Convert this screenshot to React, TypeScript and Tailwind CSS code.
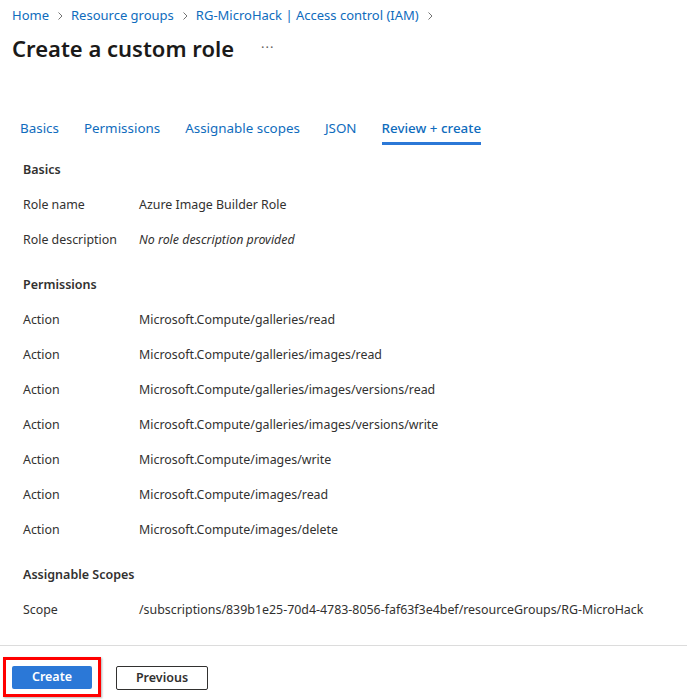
import React from "react";

const font = { fontFamily: '"Noto Sans", "Open Sans", sans-serif' };

function Chevron() {
  return (
    <svg width="12" height="12" viewBox="0 0 12 12" className="mx-[5px] text-[#737373]">
      <path d="M4.5 2.5 L8 6 L4.5 9.5" fill="none" stroke="currentColor" strokeWidth="1" />
    </svg>
  );
}

function Row({ label, value, italic }: { label: string; value: string; italic?: boolean }) {
  return (
    <div className="flex h-[35px] items-center text-[12.4px] text-[#323130]">
      <div className="w-[116px] shrink-0">{label}</div>
      <div className={italic ? "italic" : ""}>{value}</div>
    </div>
  );
}

function Heading({ children }: { children: React.ReactNode }) {
  return <div className="flex h-[35px] items-center text-[12.5px] font-semibold text-[#323130]">{children}</div>;
}

export default function App() {
  const actions = [
    "Microsoft.Compute/galleries/read",
    "Microsoft.Compute/galleries/images/read",
    "Microsoft.Compute/galleries/images/versions/read",
    "Microsoft.Compute/galleries/images/versions/write",
    "Microsoft.Compute/images/write",
    "Microsoft.Compute/images/read",
    "Microsoft.Compute/images/delete",
  ];
  return (
    <div style={font} className="w-[687px] h-[699px] bg-white flex flex-col overflow-hidden">
      <div className="flex items-center pl-[12px] pt-[5px] h-[22px] text-[13px] text-[#0f6cbd] box-content">
        <span>Home</span>
        <Chevron />
        <span>Resource groups</span>
        <Chevron />
        <span>RG-MicroHack | Access control (IAM)</span>
        <Chevron />
      </div>
      <div className="flex items-center pl-[12px] mt-[5px] h-[32px]">
        <span className="text-[22px] font-semibold text-[#1b1a19]">Create a custom role</span>
        <span className="ml-[27px] text-[13px] text-[#605e5c] tracking-[1px]">···</span>
      </div>
      <div className="mt-[50px] flex pl-[20px] h-[31px] text-[13.4px] text-[#0f6cbd]">
        <div className="pt-[4px] mr-[25px]">Basics</div>
        <div className="pt-[4px] mr-[25px]">Permissions</div>
        <div className="pt-[4px] mr-[25px]">Assignable scopes</div>
        <div className="pt-[4px] mr-[25px]">JSON</div>
        <div className="pt-[4px] border-b-[3px] border-[#2b78d7] font-medium">Review + create</div>
      </div>
      <div className="pl-[23px] mt-[8px] flex flex-col">
        <Heading>Basics</Heading>
        <Row label="Role name" value="Azure Image Builder Role" />
        <Row label="Role description" value="No role description provided" italic />
        <div className="h-[10px]" />
        <Heading>Permissions</Heading>
        {actions.map((a) => (
          <Row key={a} label="Action" value={a} />
        ))}
        <div className="h-[10px]" />
        <Heading>Assignable Scopes</Heading>
        <Row label="Scope" value="/subscriptions/839b1e25-70d4-4783-8056-faf63f3e4bef/resourceGroups/RG-MicroHack" />
      </div>
      <div className="mt-auto border-t border-[#dcdcdc] h-[54px] flex items-start pt-[11px] pl-[3px]">
        <div className="border-[3px] border-[#ff0000] px-[6px] pt-[6px] pb-[5px] shadow-[1px_1px_2px_rgba(0,0,0,0.3)]">
          <button className="w-[80px] h-[23px] bg-[#2b78d7] text-white text-[12.5px] font-semibold rounded-[2px] flex items-center justify-center">
            Create
          </button>
        </div>
        <button className="ml-[15px] mt-[9px] w-[92px] h-[24px] border border-[#323130] text-[#323130] text-[12.5px] font-semibold rounded-[2px] flex items-center justify-center">
          Previous
        </button>
      </div>
    </div>
  );
}
